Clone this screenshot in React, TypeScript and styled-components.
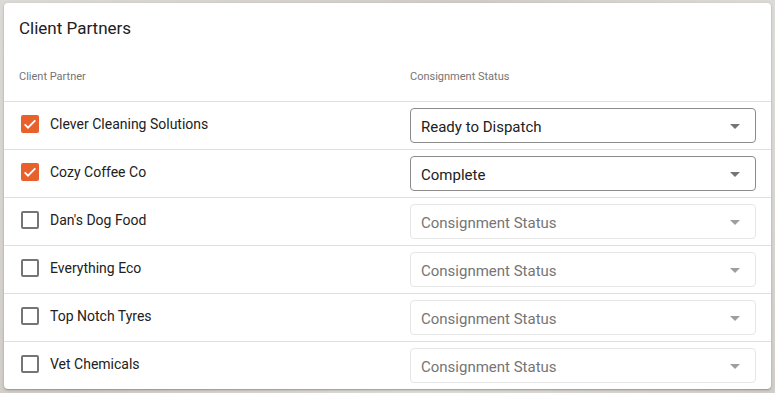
import React from 'react';
import styled, { createGlobalStyle } from 'styled-components';

const GlobalStyle = createGlobalStyle`
  html, body {
    margin: 0;
    padding: 0;
    background: #d6d3d0;
    font-family: Roboto, 'Liberation Sans', Arial, sans-serif;
  }
  body {
    background: linear-gradient(135deg, #dcdad7 0%, #cfccc8 40%, #dedcd9 70%, #d2cfcb 100%);
    min-height: 393px;
  }
`;

const Page = styled.div`
  padding: 3px 4px 4px;
`;

const Card = styled.div`
  background: #fff;
  border-radius: 4px;
  box-shadow: 0 1px 3px rgba(0, 0, 0, 0.22), 0 1px 1px rgba(0, 0, 0, 0.12);
  overflow: hidden;
`;

const Title = styled.div`
  height: 49px;
  display: flex;
  align-items: center;
  padding: 0 15px;
  font-size: 17px;
  color: #212121;
`;

const Grid = styled.div`
  display: grid;
  grid-template-columns: 391px 1fr;
  align-items: center;
  padding: 0 15px;
`;

const HeadRow = styled(Grid)`
  height: 49px;
  font-size: 11px;
  color: #757575;
`;

const Row = styled(Grid)`
  height: 47px;
  border-top: 1px solid #e0e0e0;
`;

const Partner = styled.label`
  display: flex;
  align-items: center;
  gap: 8px;
  margin-left: -1px;
  font-size: 14px;
  color: #212121;
  margin-top: -3px;
`;

const Box = styled.span<{ $checked: boolean }>`
  width: 24px;
  height: 24px;
  display: flex;
  align-items: center;
  justify-content: center;
  & > span {
    width: 18px;
    height: 18px;
    box-sizing: border-box;
    border-radius: 2px;
    background: ${({ $checked }) => ($checked ? '#e8612c' : 'transparent')};
    border: ${({ $checked }) => ($checked ? 'none' : '2px solid #757575')};
    display: flex;
    align-items: center;
    justify-content: center;
  }
`;

const Select = styled.div<{ $filled: boolean }>`
  height: 35px;
  box-sizing: border-box;
  border: 1px solid ${({ $filled }) => ($filled ? '#8a8a8a' : '#e6e6e6')};
  border-radius: 4px;
  display: flex;
  align-items: center;
  justify-content: space-between;
  padding: 0 8px 0 10px;
  font-size: 15px;
  color: ${({ $filled }) => ($filled ? '#212121' : '#757575')};
  & > span {
    padding-top: 2px;
  }
`;

const Arrow = styled.svg<{ $filled: boolean }>`
  width: 24px;
  height: 24px;
  fill: ${({ $filled }) => ($filled ? '#757575' : '#9e9e9e')};
`;

const rows = [
  { name: 'Clever Cleaning Solutions', status: 'Ready to Dispatch' },
  { name: 'Cozy Coffee Co', status: 'Complete' },
  { name: "Dan's Dog Food", status: '' },
  { name: 'Everything Eco', status: '' },
  { name: 'Top Notch Tyres', status: '' },
  { name: 'Vet Chemicals', status: '' },
];

export default function App() {
  return (
    <Page>
      <GlobalStyle />
      <Card>
        <Title>Client Partners</Title>
        <HeadRow>
          <span>Client Partner</span>
          <span>Consignment Status</span>
        </HeadRow>
        {rows.map((r) => {
          const filled = r.status !== '';
          return (
            <Row key={r.name}>
              <Partner>
                <Box $checked={filled}>
                  <span>
                    {filled && (
                      <svg width="16" height="16" viewBox="0 0 24 24">
                        <path
                          d="M4 12.5l5 5L20 6.5"
                          fill="none"
                          stroke="#fff"
                          strokeWidth="2.8"
                        />
                      </svg>
                    )}
                  </span>
                </Box>
                {r.name}
              </Partner>
              <Select $filled={filled}>
                <span>{filled ? r.status : 'Consignment Status'}</span>
                <Arrow $filled={filled} viewBox="0 0 24 24">
                  <path d="M7 10l5 5 5-5z" />
                </Arrow>
              </Select>
            </Row>
          );
        })}
      </Card>
    </Page>
  );
}
